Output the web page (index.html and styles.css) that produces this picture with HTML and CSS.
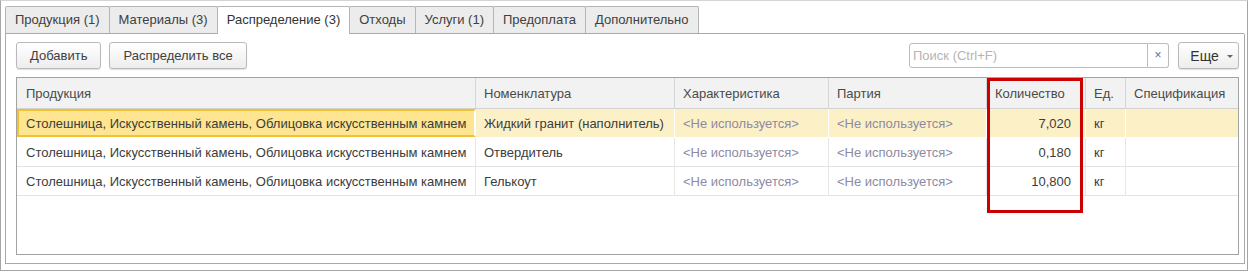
FILE: index.html
```html
<!DOCTYPE html>
<html lang="ru">
<head>
    <meta charset="UTF-8">
    <title>Распределение</title>
    <link rel="stylesheet" href="styles.css">
</head>
<body>
    <div class="window">
        <div class="tabs">
            <div class="tab">Продукция (1)</div>
            <div class="tab">Материалы (3)</div>
            <div class="tab active">Распределение (3)</div>
            <div class="tab">Отходы</div>
            <div class="tab">Услуги (1)</div>
            <div class="tab">Предоплата</div>
            <div class="tab">Дополнительно</div>
        </div>

        <div class="panel">
            <div class="toolbar">
                <button class="button">Добавить</button>
                <button class="button">Распределить все</button>
                <div class="spacer"></div>
                <div class="search">
                    <div class="search-input">Поиск (Ctrl+F)</div>
                    <div class="search-clear">×</div>
                </div>
                <button class="button more-button">Еще <span class="caret"></span></button>
            </div>

            <div class="grid">
                <div class="row header">
                    <div class="cell first">Продукция</div>
                    <div class="cell">Номенклатура</div>
                    <div class="cell">Характеристика</div>
                    <div class="cell">Партия</div>
                    <div class="cell">Количество</div>
                    <div class="cell">Ед.</div>
                    <div class="cell last">Спецификация</div>
                </div>
                <div class="row selected">
                    <div class="cell first focused">Столешница, Искусственный камень, Облицовка искусственным камнем</div>
                    <div class="cell">Жидкий гранит (наполнитель)</div>
                    <div class="cell muted">&lt;Не используется&gt;</div>
                    <div class="cell muted">&lt;Не используется&gt;</div>
                    <div class="cell number">7,020</div>
                    <div class="cell">кг</div>
                    <div class="cell last"></div>
                </div>
                <div class="row">
                    <div class="cell first">Столешница, Искусственный камень, Облицовка искусственным камнем</div>
                    <div class="cell">Отвердитель</div>
                    <div class="cell muted">&lt;Не используется&gt;</div>
                    <div class="cell muted">&lt;Не используется&gt;</div>
                    <div class="cell number">0,180</div>
                    <div class="cell">кг</div>
                    <div class="cell last"></div>
                </div>
                <div class="row">
                    <div class="cell first">Столешница, Искусственный камень, Облицовка искусственным камнем</div>
                    <div class="cell">Гелькоут</div>
                    <div class="cell muted">&lt;Не используется&gt;</div>
                    <div class="cell muted">&lt;Не используется&gt;</div>
                    <div class="cell number">10,800</div>
                    <div class="cell">кг</div>
                    <div class="cell last"></div>
                </div>

                <!-- annotation around the quantity column -->
                <div class="highlight-box"></div>
            </div>
        </div>
    </div>
</body>
</html>
```

FILE: styles.css
```css
/* General Styling */
body {
    margin: 0;
    background: #fff;
    font-family: "Liberation Sans", Arial, sans-serif;
    font-size: 13px;
    color: #3c3c3c;
}

.window {
    width: 1248px;
    height: 271px;
    box-sizing: border-box;
    border: 1px solid #a6a6a6;
    border-top-color: #d4d4d4;
    padding: 5px 2px 6px 4px;
}

/* Tabs */
.tabs {
    display: flex;
    height: 27px;
    border-bottom: 1px solid #a9a9a9;
    box-sizing: content-box;
    width: 1239px;
}

.tab {
    height: 27px;
    box-sizing: border-box;
    padding: 0 9px;
    line-height: 26px;
    background: #ececec;
    border: 1px solid #b5b5b5;
    border-bottom: none;
    border-radius: 2px 2px 0 0;
    margin-left: -1px;
    color: #404040;
    white-space: nowrap;
}

.tab:first-child {
    margin-left: 0;
}

.tab.active {
    background: #fff;
    height: 28px;
    margin-bottom: -1px;
    position: relative;
    color: #333;
}

/* Panel */
.panel {
    width: 1240px;
    height: 230px;
    box-sizing: border-box;
    border: 1px solid #a9a9a9;
    border-top: none;
    padding: 8px 5px 8px 10px;
}

.toolbar {
    display: flex;
    align-items: center;
    height: 27px;
    margin-bottom: 8px;
}

.button {
    height: 27px;
    padding: 0 13px;
    margin-right: 8px;
    font-family: "Liberation Sans", Arial, sans-serif;
    font-size: 13px;
    color: #404040;
    background: linear-gradient(#ffffff, #ededed);
    border: 1px solid #b9b9b9;
    border-radius: 3px;
    box-shadow: 0 1px 1px rgba(0, 0, 0, 0.12);
    cursor: pointer;
}

.spacer {
    flex: 1;
}

.search {
    display: flex;
    height: 25px;
    margin-right: 9px;
}

.search-input {
    width: 239px;
    box-sizing: border-box;
    border: 1px solid #bcbcbc;
    border-radius: 3px 0 0 3px;
    padding-left: 3px;
    line-height: 23px;
    color: #b4b4b4;
}

.search-clear {
    width: 21px;
    box-sizing: border-box;
    border: 1px solid #bcbcbc;
    border-left: none;
    border-radius: 0 3px 3px 0;
    text-align: center;
    line-height: 22px;
    font-size: 12px;
    color: #707070;
}

.more-button {
    width: 61px;
    margin-right: 0;
    padding: 0 0 0 6px;
    font-size: 14px;
    color: #333;
}

.caret {
    display: inline-block;
    width: 0;
    height: 0;
    margin-left: 4px;
    vertical-align: middle;
    border-left: 3px solid transparent;
    border-right: 3px solid transparent;
    border-top: 3px solid #666;
}

/* Table */
.grid {
    position: relative;
    height: 178px;
    box-sizing: border-box;
    border: 1px solid #a3a3a3;
}

.row {
    display: grid;
    grid-template-columns: 459px 199px 154px 158px 99px 40px 1fr;
    height: 29px;
    border-bottom: 1px solid #e3e3e3;
    box-sizing: border-box;
}

.row.header {
    height: 31px;
    background: #f2f2f2;
    border-bottom: 1px solid #d2d2d2;
    color: #4a4a4a;
}

.cell {
    padding: 1px 8px 0;
    line-height: 28px;
    border-right: 1px solid #e6e6e6;
    white-space: nowrap;
    overflow: hidden;
}

.header .cell {
    padding-top: 0;
    line-height: 31px;
    border-right-color: #d6d6d6;
}

.cell.first {
    padding-left: 9px;
}

.cell.last {
    border-right: none;
}

.cell.muted {
    color: #8e8aa3;
}

.cell.number {
    text-align: right;
    padding-right: 14px;
}

.row.selected {
    background: #fcf0c6;
    border-bottom-color: #ffffff;
}

.row.selected .cell {
    border-right-color: #ffffff;
}

.cell.focused {
    background: #fde591;
    border: 2px solid #f3c233;
    line-height: 24px;
    padding-left: 7px;
}

.highlight-box {
    position: absolute;
    left: 970px;
    top: 0;
    width: 96px;
    height: 135px;
    box-sizing: border-box;
    border: 3px solid #cc0000;
}
```
